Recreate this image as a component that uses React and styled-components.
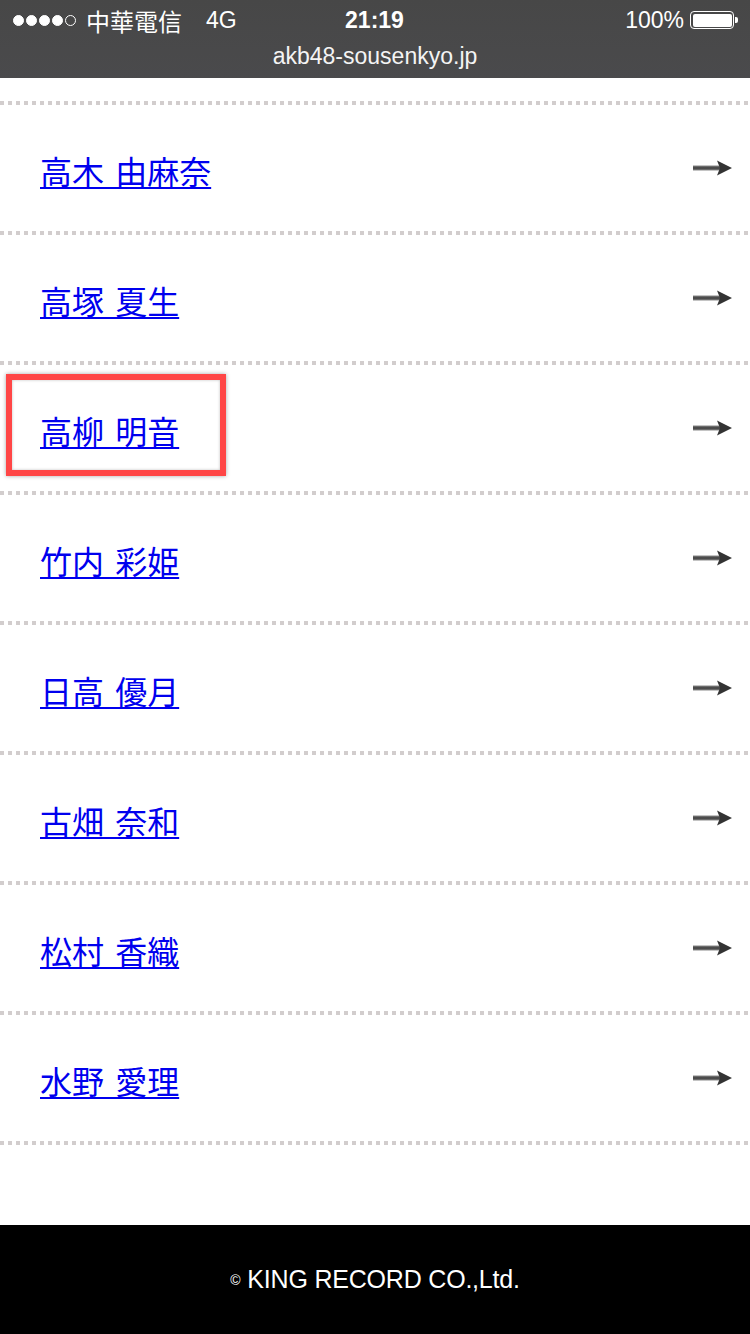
import styled, { createGlobalStyle } from "styled-components";

const GlobalStyle = createGlobalStyle`
  html, body {
    margin: 0;
    padding: 0;
    background: #fff;
  }
  body {
    font-family: "Liberation Sans", "Noto Sans CJK JP", sans-serif;
  }
`;

const members = [
  "高木 由麻奈",
  "高塚 夏生",
  "高柳 明音",
  "竹内 彩姫",
  "日高 優月",
  "古畑 奈和",
  "松村 香織",
  "水野 愛理",
];

const Page = styled.div`
  width: 750px;
  min-height: 1334px;
  display: flex;
  flex-direction: column;
`;

const StatusBar = styled.header`
  height: 78px;
  background: linear-gradient(#474747, #4a4a4c);
  color: #fff;
  display: flex;
  flex-direction: column;
`;

const StatusRow = styled.div`
  height: 40px;
  display: grid;
  grid-template-columns: 1fr auto 1fr;
  align-items: center;
  padding: 0 12px 0 13px;
  font-size: 23px;
`;

const Carrier = styled.div`
  display: flex;
  align-items: center;
  gap: 6px;
  font-family: "Noto Sans CJK TC", "Liberation Sans", sans-serif;
  font-size: 24px;
  span.net {
    font-family: "Liberation Sans", sans-serif;
    font-size: 23px;
    margin-left: 18px;
  }
`;

const Signal = styled.div`
  display: flex;
  gap: 2px;
  margin-right: 4px;
`;

const Dot = styled.i`
  width: 11px;
  height: 11px;
  border-radius: 50%;
  box-sizing: border-box;
  background: ${({ off }) => (off ? "transparent" : "#fff")};
  border: 1.5px solid #fff;
`;

const Clock = styled.div`
  font-weight: bold;
  font-size: 23px;
  padding-right: 2px;
`;

const Battery = styled.div`
  justify-self: end;
  display: flex;
  align-items: center;
  gap: 6px;
  font-size: 23px;
`;

const BatteryShell = styled.div`
  position: relative;
  width: 44px;
  height: 18px;
  border: 1.5px solid #fff;
  border-radius: 4px;
  padding: 1.5px;
  box-sizing: border-box;
  margin-right: 4px;
  &::before {
    content: "";
    display: block;
    height: 100%;
    background: #fff;
    border-radius: 2px;
  }
  &::after {
    content: "";
    position: absolute;
    right: -5px;
    top: 5px;
    width: 3px;
    height: 6px;
    background: #fff;
    border-radius: 0 2px 2px 0;
  }
`;

const Url = styled.div`
  text-align: center;
  font-size: 23px;
  line-height: 28px;
  padding-top: 2px;
  color: #f4f4f4;
`;

const List = styled.ul`
  list-style: none;
  margin: 23px 0 0;
  padding: 0;
`;

const Dotted = styled.div`
  height: 4px;
  background-image: linear-gradient(to right, #d2cdcd 4px, transparent 4px);
  background-size: 8px 4px;
`;

const Item = styled.li`
  position: relative;
  height: 126px;
  display: flex;
  align-items: center;
  justify-content: space-between;
  padding: 0 17px 0 40px;
`;

const Name = styled.a`
  font-family: "Noto Sans CJK JP", sans-serif;
  font-size: 32px;
  line-height: 40px;
  color: #0000ee;
  text-decoration: underline;
  text-underline-offset: 3px;
  text-decoration-thickness: 2px;
  word-spacing: 4px;
  margin-top: 3px;
`;

const Highlight = styled.span`
  position: absolute;
  left: 6px;
  top: 9px;
  width: 220px;
  height: 102px;
  box-sizing: border-box;
  border: 6px solid #ff4646;
  box-shadow: 0 0 4px rgba(0, 0, 0, 0.35), inset 0 0 3px rgba(0, 0, 0, 0.25);
  pointer-events: none;
`;

const Arrow = () => (
  <svg width="40" height="18" viewBox="0 0 40 18">
    <defs>
      <linearGradient id="shaft" x1="0" y1="0" x2="0" y2="1">
        <stop offset="0" stopColor="#8a8a8a" />
        <stop offset="0.5" stopColor="#3c3c3c" />
        <stop offset="1" stopColor="#8a8a8a" />
      </linearGradient>
    </defs>
    <rect x="0" y="6.5" width="27" height="5" fill="url(#shaft)" />
    <path d="M24 1.5 L39 9 L24 16.5 L27 9 Z" fill="#333" />
  </svg>
);

const Footer = styled.footer`
  margin-top: auto;
  height: 109px;
  background: #000;
  color: #fff;
  display: flex;
  align-items: center;
  justify-content: center;
  font-size: 25px;
  letter-spacing: -0.2px;
  small {
    font-size: 14px;
    margin-right: 7px;
  }
`;

export default function App() {
  return (
    <>
      <GlobalStyle />
      <Page>
        <StatusBar>
          <StatusRow>
            <Carrier>
              <Signal>
                <Dot />
                <Dot />
                <Dot />
                <Dot />
                <Dot off />
              </Signal>
              中華電信
              <span className="net">4G</span>
            </Carrier>
            <Clock>21:19</Clock>
            <Battery>
              100%
              <BatteryShell />
            </Battery>
          </StatusRow>
          <Url>akb48-sousenkyo.jp</Url>
        </StatusBar>
        <List>
          <Dotted />
          {members.map((name, i) => (
            <div key={name}>
              <Item>
                <Name href="#">{name}</Name>
                <Arrow />
                {i === 2 && <Highlight />}
              </Item>
              <Dotted />
            </div>
          ))}
        </List>
        <Footer>
          <small>©</small>KING RECORD CO.,Ltd.
        </Footer>
      </Page>
    </>
  );
}
